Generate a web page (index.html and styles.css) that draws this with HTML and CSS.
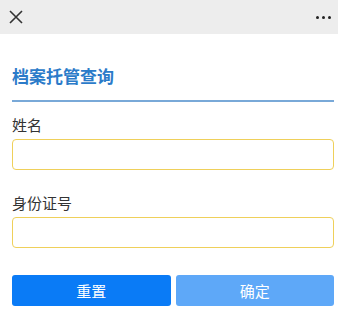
FILE: index.html
```html
<!DOCTYPE html>
<html lang="zh-CN">
<head>
    <meta charset="UTF-8">
    <meta name="viewport" content="width=device-width, initial-scale=1.0">
    <title>档案托管查询</title>
    <link rel="stylesheet" href="styles.css">
</head>
<body>
    <!-- 顶部栏 -->
    <div class="topbar">
        <svg class="close-icon" width="14" height="14" viewBox="0 0 14 14">
            <path d="M1 1 L13 13 M13 1 L1 13" stroke="#333" stroke-width="1.6" fill="none"/>
        </svg>
        <div class="more">
            <span></span><span></span><span></span>
        </div>
    </div>

    <div class="container">
        <h2 class="title">档案托管查询</h2>

        <div class="field">
            <label for="name">姓名</label>
            <input type="text" id="name">
        </div>

        <div class="field">
            <label for="idcard">身份证号</label>
            <input type="text" id="idcard">
        </div>

        <div class="actions">
            <button class="btn btn-reset" type="button">重置</button>
            <button class="btn btn-submit" type="button">确定</button>
        </div>
    </div>
</body>
</html>
```

FILE: styles.css
```css
body {
    font-family: "Noto Sans CJK SC", "Noto Sans", sans-serif;
    margin: 0;
    background-color: #fff;
    color: #333;
}
.topbar {
    height: 34px;
    background-color: #ededed;
    display: flex;
    align-items: center;
    justify-content: space-between;
    padding: 0 7px 0 9px;
}
.more {
    display: flex;
    gap: 3px;
}
.more span {
    width: 3px;
    height: 3px;
    border-radius: 50%;
    background-color: #222;
}
.container {
    padding: 0 4px 0 12px;
}
.title {
    margin: 29px 0 0;
    padding-bottom: 11px;
    font-size: 17px;
    line-height: 26px;
    font-weight: bold;
    color: #2b7bc9;
    border-bottom: 2px solid #79a9d8;
}
.field {
    display: flex;
    flex-direction: column;
    margin-top: 13px;
}
.field + .field {
    margin-top: 23px;
}
.field label {
    font-size: 15px;
    line-height: 20px;
    margin-bottom: 4px;
    color: #333;
}
.field input {
    height: 31px;
    box-sizing: border-box;
    border: 1px solid #efd05a;
    border-radius: 4px;
    padding: 0 8px;
    font-size: 14px;
    outline: none;
}
.actions {
    display: flex;
    gap: 5px;
    margin-top: 27px;
}
.btn {
    flex: 1;
    height: 31px;
    border: none;
    border-radius: 3px;
    color: #fff;
    font-family: inherit;
    font-size: 15px;
}
.btn-reset {
    background-color: #0a7bf6;
}
.btn-submit {
    background-color: #5ea8f8;
}
```
